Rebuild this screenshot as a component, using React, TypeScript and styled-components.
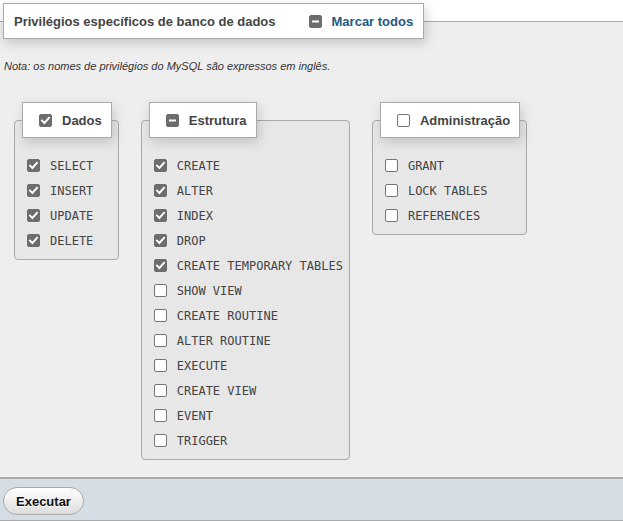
import React from "react";
import styled, { createGlobalStyle } from "styled-components";

const GlobalStyle = createGlobalStyle`
  html, body { margin: 0; padding: 0; background: #fff; }
  body { font-family: "Liberation Sans", Arial, sans-serif; color: #444; }
`;

type BoxState = "checked" | "unchecked" | "mixed";

const Box = styled.span<{ $state: BoxState }>`
  display: inline-flex;
  align-items: center;
  justify-content: center;
  flex: 0 0 auto;
  width: 13px;
  height: 13px;
  box-sizing: border-box;
  border-radius: 2px;
  border: 1px solid ${(p) => (p.$state === "unchecked" ? "#767676" : "#6d6d6d")};
  background: ${(p) => (p.$state === "unchecked" ? "#fff" : "#6d6d6d")};
`;

const Check = ({ state }: { state: BoxState }) => (
  <Box $state={state}>
    {state === "checked" && (
      <svg width="11" height="11" viewBox="0 0 11 11">
        <polyline points="2,5.6 4.4,8 9,2.8" fill="none" stroke="#fff" strokeWidth="1.9" strokeLinecap="square" />
      </svg>
    )}
    {state === "mixed" && (
      <svg width="11" height="11" viewBox="0 0 11 11">
        <rect x="2" y="4.5" width="7" height="2" fill="#fff" />
      </svg>
    )}
  </Box>
);

const OuterFieldset = styled.fieldset`
  margin: 3px 0 0;
  padding: 0 3px 17px;
  min-width: 0;
  border: none;
  border-top: 1px solid #aaa;
  border-bottom: 1px solid #aaa;
  background: #eee;
`;

const MainLegend = styled.legend`
  padding: 0;
  margin: 0;
  background: #fff;
  border: 1px solid #aaa;
  box-shadow: 2px 4px 12px rgba(0, 0, 0, 0.18);
`;

const MainLegendInner = styled.span`
  display: flex;
  align-items: center;
  height: 34px;
  padding: 0 10px 0 10px;
  font-size: 13px;
  font-weight: bold;
  color: #444;
`;

const Title = styled.span`
  margin-right: 33px;
`;

const MarkAll = styled.span`
  display: flex;
  align-items: center;
  gap: 10px;
  color: #235a81;
`;

const Note = styled.p`
  margin: 21px 0 0 1px;
  font-size: 11px;
  line-height: 13px;
  font-style: italic;
  color: #333;
`;

const Groups = styled.div`
  display: flex;
  align-items: flex-start;
  gap: 22px;
  margin: 29px 0 0 11px;
`;

const Group = styled.fieldset`
  margin: 0;
  padding: 0 6px 6px 6px;
  min-width: 0;
  border: 1px solid #aaa;
  border-radius: 4px;
  background: #e7e7e7;
`;

const GroupLegend = styled.legend`
  padding: 0;
  margin: 0 0 0 1px;
  background: #fff;
  border: 1px solid #aaa;
  box-shadow: 2px 4px 12px rgba(0, 0, 0, 0.16);
`;

const GroupLegendInner = styled.span`
  display: flex;
  align-items: center;
  gap: 10px;
  height: 34px;
  padding: 0 9px 0 16px;
  font-size: 13px;
  font-weight: bold;
  color: #444;
`;

const List = styled.div`
  margin-top: 15px;
  display: flex;
  flex-direction: column;
`;

const Item = styled.label`
  display: flex;
  align-items: center;
  gap: 10px;
  height: 25px;
  padding-left: 6px;
  font-family: "DejaVu Sans Mono", "Liberation Mono", monospace;
  font-size: 12px;
  color: #444;
  white-space: nowrap;
`;

const Footer = styled.div`
  background: #d5dde5;
  border-top: 1px solid #aaa;
  border-bottom: 1px solid #aaa;
  padding: 8px 3px 5px;
`;

const Button = styled.button`
  height: 28px;
  padding: 0 12px;
  border: 1px solid #aaa;
  border-radius: 14px;
  background: linear-gradient(#ffffff, #dddddd);
  font-family: "Liberation Sans", Arial, sans-serif;
  font-size: 13px;
  font-weight: bold;
  color: #111;
  text-shadow: 0 1px 0 #fff;
  cursor: pointer;
`;

type Priv = { name: string; on: boolean };
type GroupData = { title: string; state: BoxState; items: Priv[] };

const groups: GroupData[] = [
  {
    title: "Dados",
    state: "checked",
    items: [
      { name: "SELECT", on: true },
      { name: "INSERT", on: true },
      { name: "UPDATE", on: true },
      { name: "DELETE", on: true },
    ],
  },
  {
    title: "Estrutura",
    state: "mixed",
    items: [
      { name: "CREATE", on: true },
      { name: "ALTER", on: true },
      { name: "INDEX", on: true },
      { name: "DROP", on: true },
      { name: "CREATE TEMPORARY TABLES", on: true },
      { name: "SHOW VIEW", on: false },
      { name: "CREATE ROUTINE", on: false },
      { name: "ALTER ROUTINE", on: false },
      { name: "EXECUTE", on: false },
      { name: "CREATE VIEW", on: false },
      { name: "EVENT", on: false },
      { name: "TRIGGER", on: false },
    ],
  },
  {
    title: "Administração",
    state: "unchecked",
    items: [
      { name: "GRANT", on: false },
      { name: "LOCK TABLES", on: false },
      { name: "REFERENCES", on: false },
    ],
  },
];

export default function App() {
  return (
    <>
      <GlobalStyle />
      <OuterFieldset>
        <MainLegend>
          <MainLegendInner>
            <Title>Privilégios específicos de banco de dados</Title>
            <MarkAll>
              <Check state="mixed" />
              Marcar todos
            </MarkAll>
          </MainLegendInner>
        </MainLegend>
        <Note>Nota: os nomes de privilégios do MySQL são expressos em inglês.</Note>
        <Groups>
          {groups.map((g) => (
            <Group key={g.title}>
              <GroupLegend>
                <GroupLegendInner>
                  <Check state={g.state} />
                  {g.title}
                </GroupLegendInner>
              </GroupLegend>
              <List>
                {g.items.map((it) => (
                  <Item key={it.name}>
                    <Check state={it.on ? "checked" : "unchecked"} />
                    {it.name}
                  </Item>
                ))}
              </List>
            </Group>
          ))}
        </Groups>
      </OuterFieldset>
      <Footer>
        <Button>Executar</Button>
      </Footer>
    </>
  );
}
